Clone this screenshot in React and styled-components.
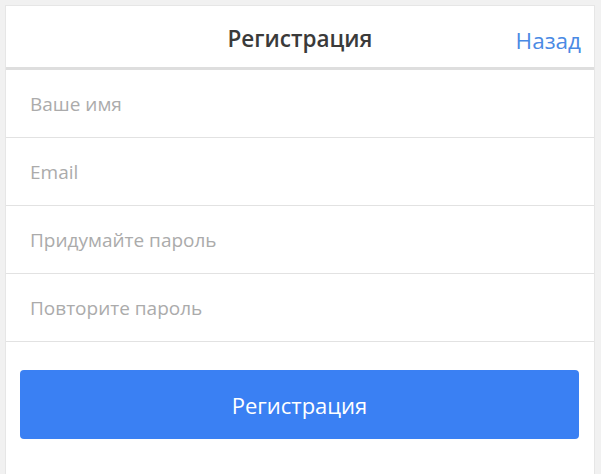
import React from 'react';
import styled, { createGlobalStyle } from 'styled-components';

const GlobalStyle = createGlobalStyle`
  html, body {
    margin: 0;
    padding: 0;
    background: #f1f1f1;
    font-family: "Open Sans", "Noto Sans", Arial, sans-serif;
  }
`;

const fields = ['Ваше имя', 'Email', 'Придумайте пароль', 'Повторите пароль'];

const App = () => {
  return (
    <Page>
      <GlobalStyle />
      <Card>
        <Header>
          <Title>Регистрация</Title>
          <BackLink href="#">Назад</BackLink>
        </Header>
        <Form onSubmit={(e) => e.preventDefault()}>
          {fields.map((f) => (
            <Field key={f}>
              <Input type={f.includes('пароль') ? 'password' : 'text'} placeholder={f} />
            </Field>
          ))}
          <Footer>
            <SubmitButton type="submit">Регистрация</SubmitButton>
          </Footer>
        </Form>
      </Card>
    </Page>
  );
};

const Page = styled.div`
  padding: 5px 6px 0 5px;
  min-height: 474px;
  box-sizing: border-box;
`;

const Card = styled.div`
  background: #fff;
  border: 1px solid #e6e6e6;
  border-bottom: none;
  min-height: 469px;
  box-sizing: border-box;
`;

const Header = styled.div`
  position: relative;
  height: 57px;
  display: flex;
  align-items: center;
  justify-content: center;
  padding-top: 4px;
  border-bottom: 3px solid #dedede;
  box-sizing: content-box;
`;

const Title = styled.h1`
  margin: 0;
  font-size: 22.5px;
  font-weight: 600;
  color: #3a3a3a;
`;

const BackLink = styled.a`
  position: absolute;
  right: 13px;
  top: 50%;
  transform: translateY(-40%);
  font-size: 22.5px;
  color: #4a8ae4;
  text-decoration: none;
`;

const Form = styled.form`
  display: flex;
  flex-direction: column;
`;

const Field = styled.div`
  height: 67px;
  display: flex;
  align-items: center;
  border-bottom: 1px solid #e2e2e2;
  padding: 0 24px;
`;

const Input = styled.input`
  border: none;
  outline: none;
  width: 100%;
  font-family: inherit;
  font-size: 19px;
  color: #333;
  background: transparent;
  padding: 0;
  &::placeholder {
    color: #ababab;
  }
`;

const Footer = styled.div`
  padding: 28px 15px 0 14px;
`;

const SubmitButton = styled.button`
  width: 100%;
  height: 69px;
  border: none;
  border-radius: 4px;
  background: #3a80f3;
  color: #fff;
  font-family: inherit;
  font-size: 22px;
  cursor: pointer;
`;

export default App;
